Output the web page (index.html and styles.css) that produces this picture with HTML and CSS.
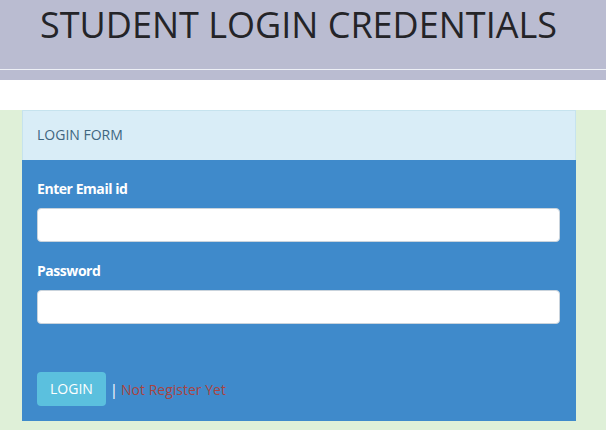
FILE: index.html
```html
<!DOCTYPE html>
<html lang="en">
<head>
<meta charset="utf-8">
<title>Student Login Credentials</title>
<link rel="stylesheet" href="styles.css">
</head>
<body>
<header class="site-header">
  <h1 class="site-title">STUDENT LOGIN CREDENTIALS</h1>
  <div class="header-rule"></div>
</header>
<div class="gap"></div>
<main class="page">
  <section class="panel">
    <div class="panel-heading">LOGIN FORM</div>
    <form class="panel-body">
      <label class="field-label" for="email">Enter Email id</label>
      <input class="field-input" id="email" type="text">
      <label class="field-label second" for="pass">Password</label>
      <input class="field-input" id="pass" type="password">
      <div class="actions">
        <button type="button" class="btn-login">LOGIN</button>
        <span class="sep">|</span>
        <a class="register" href="#">Not Register Yet</a>
      </div>
    </form>
  </section>
</main>
</body>
</html>
```
FILE: styles.css
```css
html, body {
  margin: 0;
  padding: 0;
  height: 100%;
}
body {
  background: #ffffff;
  font-family: "Open Sans", "Liberation Sans", sans-serif;
  font-size: 14px;
  color: #333;
  display: flex;
  flex-direction: column;
}
.site-header {
  background: #babcd1;
  height: 80px;
  display: flex;
  flex-direction: column;
}
.site-title {
  margin: 0;
  padding: 3px 0 0 40px;
  box-sizing: border-box;
  height: 69px;
  font-size: 36px;
  font-weight: 400;
  line-height: 44px;
  color: #242428;
}
.header-rule {
  height: 1px;
  background: #eef0f6;
}
.gap {
  height: 30px;
}
.page {
  flex: 1;
  background: #dff0d8;
  padding: 0 30px 0 22px;
}
.panel {
  width: 554px;
}
.panel-heading {
  background: #d9edf7;
  border: 1px solid #c6e3ee;
  border-bottom: 0;
  padding: 14px 15px 15px 14px;
  line-height: 20px;
  font-size: 14px;
  color: #40667f;
}
.panel-body {
  background: #3f8acb;
  padding: 19px 16px 15px 15px;
  display: flex;
  flex-direction: column;
  align-items: stretch;
}
.field-label {
  display: block;
  color: #ffffff;
  font-weight: 700;
  font-size: 14px;
  line-height: 20px;
  letter-spacing: -0.45px;
  margin-bottom: 9px;
}
.field-label.second {
  margin-top: 19px;
}
.field-input {
  height: 34px;
  box-sizing: border-box;
  border: 1px solid #c9d3dc;
  border-radius: 4px;
  background: #fff;
  margin: 0;
  padding: 6px 12px;
}
.actions {
  margin-top: 48px;
  display: flex;
  align-items: center;
}
.btn-login {
  height: 34px;
  padding: 0 13px;
  background: #5bc0de;
  border: 0;
  border-radius: 4px;
  color: #fff;
  font-family: "Open Sans", "Liberation Sans", sans-serif;
  font-size: 14px;
  font-weight: 500;
  line-height: 20px;
}
.sep {
  color: #fff;
  margin-left: 4px;
  font-size: 15px;
}
.register {
  color: #a94442;
  text-decoration: none;
  margin-left: 3px;
  font-size: 14px;
}
```
